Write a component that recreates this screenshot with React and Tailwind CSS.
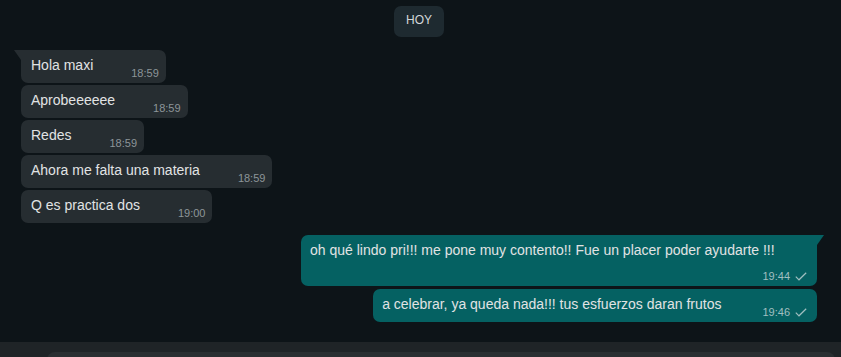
import React from "react"

const incoming = [
  { text: "Hola maxi", time: "18:59" },
  { text: "Aprobeeeeee", time: "18:59" },
  { text: "Redes", time: "18:59" },
  { text: "Ahora me falta una materia", time: "18:59" },
  { text: "Q es practica dos", time: "19:00" },
]

const outgoing = [
  { text: "oh qué lindo pri!!! me pone muy contento!! Fue un placer poder ayudarte !!!", time: "19:44" },
  { text: "a celebrar, ya queda nada!!! tus esfuerzos daran frutos", time: "19:46" },
]

function Check() {
  return (
    <svg width="12" height="9" viewBox="0 0 12 9" className="ml-[5px] mb-[3px]">
      <polyline points="0.8,4.6 4,7.8 11.2,0.8" fill="none" stroke="currentColor" strokeWidth="1.2" />
    </svg>
  )
}

function InBubble({ msg, first }) {
  return (
    <div
      className={
        "relative flex items-end rounded-[7px] bg-[#262d31] pl-[10px] pr-[7px] pt-[6px] pb-[2px] " +
        (first ? "rounded-tl-none" : "")
      }
    >
      {first && (
        <svg width="7" height="10" viewBox="0 0 7 10" className="absolute left-[-7px] top-0">
          <polygon points="0,0 7,0 7,10" fill="#262d31" />
        </svg>
      )}
      <span className="mb-[6px] text-[14px] leading-[19px] text-[#e1e3e4]">{msg.text}</span>
      <span className="ml-[38px] text-[11px] leading-[15px] text-[#8d9599]">{msg.time}</span>
    </div>
  )
}

function OutBubble({ msg, first }) {
  return (
    <div
      className={
        "relative flex max-w-[516px] flex-wrap items-end justify-end rounded-[7px] bg-[#056162] pl-[9px] pr-[10px] pt-[6px] pb-[2px] " +
        (first ? "rounded-tr-none" : "")
      }
    >
      {first && (
        <svg width="7" height="10" viewBox="0 0 7 10" className="absolute right-[-7px] top-0">
          <polygon points="0,0 7,0 0,10" fill="#056162" />
        </svg>
      )}
      <span className="mb-[6px] mr-auto text-[14px] leading-[19px] text-[#e1e3e4]">{msg.text}</span>
      <span className="mt-[3px] ml-[41px] flex items-end text-[11px] leading-[15px] text-[#a0bfc0]">
        {msg.time}
        <Check />
      </span>
    </div>
  )
}

export default function App() {
  return (
    <div className="flex h-[357px] w-full flex-col overflow-hidden bg-[#0d1418] font-['Liberation_Sans',Arial,sans-serif]">
      {/* chat */}
      <div className="flex h-[342px] shrink-0 flex-col pl-[21px] pr-[24px] pt-[6px]">
        <div className="flex justify-center">
          <span className="rounded-[7px] bg-[#1e2a30] px-[12px] pt-[7px] pb-[9px] text-[12px] leading-[15px] text-[#d3d7d9]">
            HOY
          </span>
        </div>

        <div className="mt-[13px] flex flex-col items-start gap-[2px]">
          {incoming.map((m, i) => (
            <InBubble key={i} msg={m} first={i === 0} />
          ))}
        </div>

        <div className="mt-[12px] flex flex-col items-end gap-[3px]">
          {outgoing.map((m, i) => (
            <OutBubble key={i} msg={m} first={i === 0} />
          ))}
        </div>
      </div>

      {/* footer */}
      <div className="h-[62px] shrink-0 bg-[#1f2427] pl-[47px] pr-[6px] pt-[10px]">
        <div className="h-[42px] rounded-[8px] bg-[#2a2f32]" />
      </div>
    </div>
  )
}
